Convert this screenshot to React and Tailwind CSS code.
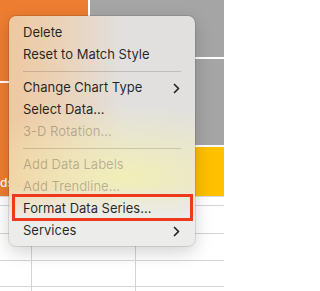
const items = [
  { label: "Delete" },
  { label: "Reset to Match Style" },
  { sep: true },
  { label: "Change Chart Type", sub: true },
  { label: "Select Data..." },
  { label: "3-D Rotation...", off: true },
  { sep: true },
  { label: "Add Data Labels", off: true },
  { label: "Add Trendline...", off: true },
  { label: "Format Data Series..." },
  { label: "Services", sub: true },
];

const Chevron = () => (
  <svg width="7" height="11" viewBox="0 0 7 11" fill="none">
    <path d="M1.5 1.5L5.5 5.5L1.5 9.5" stroke="#222" strokeWidth="1.7" strokeLinecap="round" strokeLinejoin="round" />
  </svg>
);

// vibrancy faked with layered gradients (orange left, yellow lower right, grey top right)
const ContextMenu = () => {
  return (
    <div className="absolute left-[9px] top-[16px] w-[186px] rounded-[7px] bg-[#e1e0df] bg-[linear-gradient(to_bottom,rgba(236,236,234,0)_74%,rgba(236,236,234,1)_88%),radial-gradient(ellipse_95%_32%_at_62%_70%,rgba(244,240,180,0.9),rgba(244,240,180,0)),linear-gradient(to_right,rgba(238,200,160,1)_0%,rgba(236,208,178,0.85)_28%,rgba(228,220,212,0)_62%)] shadow-[0_6px_18px_rgba(0,0,0,0.18)] ring-1 ring-black/10 pt-[6px] pb-[4px]">
      {items.map((it, i) =>
        it.sep ? (
          <div key={i} className="h-[11px] flex items-center px-[14px]">
            <div className="h-px w-full bg-black/15" />
          </div>
        ) : (
          <div
            key={i}
            className={
              "h-[22px] flex items-center justify-between pl-[14px] pr-[15px] text-[13px] " +
              (it.off ? "text-black/25" : "text-black/85")
            }
          >
            <span>{it.label}</span>
            {it.sub && <Chevron />}
          </div>
        )
      )}
    </div>
  );
};

const GridRow = ({ h }) => (
  <div className={"flex border-b border-[#d4d4d4] " + h}>
    <div className="w-[32px] border-r border-[#d4d4d4]" />
    <div className="w-[104px] border-r border-[#d4d4d4]" />
    <div className="flex-1" />
  </div>
);

export default function App() {
  return (
    <div
      className="relative w-[224px] h-[291px] overflow-hidden bg-white"
      style={{ fontFamily: "Inter, 'Liberation Sans', sans-serif" }}
    >
      {/* chart */}
      <div className="flex gap-[2px] h-[197px] bg-white border-b border-[#dcdcdc]">
        <div className="w-[88px] flex flex-col gap-[2px]">
          <div className="h-[81px] bg-[#ed7d31]" />
          <div className="flex-1 bg-[#ed7d31] relative">
            <span className="absolute left-0 bottom-[7px] text-[12px] leading-none font-medium text-white">ds</span>
          </div>
        </div>
        <div className="flex-1 flex flex-col gap-[2px]">
          <div className="h-[57px] bg-[#a5a5a5]" />
          <div className="h-[86px] bg-[#a5a5a5]" />
          <div className="flex-1 bg-[#ffc000]" />
        </div>
      </div>

      {/* sheet grid */}
      <div className="flex flex-col">
        <GridRow h="h-[9px]" />
        <GridRow h="h-[28px]" />
        <GridRow h="h-[27px]" />
        <GridRow h="h-[26px]" />
        <GridRow h="h-[28px]" />
      </div>

      <ContextMenu />

      <div className="absolute left-[12px] top-[194px] w-[181px] h-[27px] border-[3px] border-[#f0391c]" />
    </div>
  );
}
